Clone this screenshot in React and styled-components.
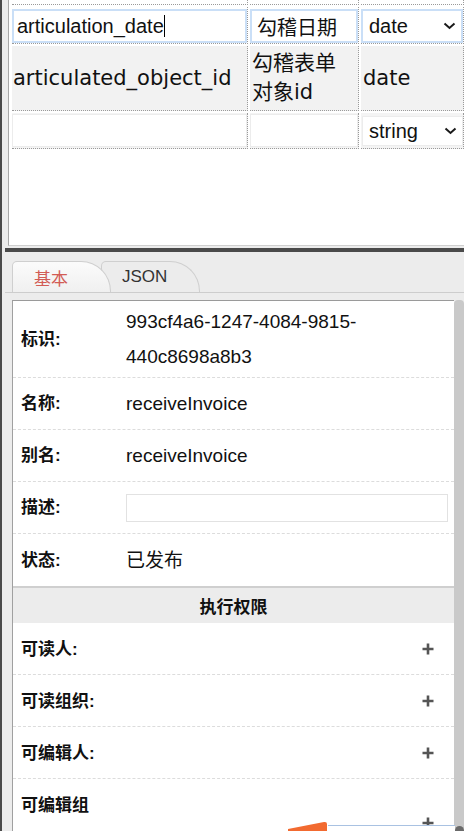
import React from "react";
import styled, { createGlobalStyle } from "styled-components";

const GlobalStyle = createGlobalStyle`
  html, body {
    margin: 0;
    padding: 0;
    overflow: hidden;
    background: #ececec;
  }
  * {
    box-sizing: border-box;
  }
`;

const SANS = `"Liberation Sans", "Noto Sans CJK SC", sans-serif`;

const Page = styled.div`
  position: relative;
  display: flex;
  height: 831px;
  overflow: hidden;
  background: #ececec;
  font-family: ${SANS};
  color: #111;
`;

const Edge = styled.div`
  width: 2px;
  flex: none;
  background: #4a4a4a;
`;

const Main = styled.div`
  flex: 1;
  display: flex;
  flex-direction: column;
  min-width: 0;
`;

const TopPanel = styled.div`
  margin-left: 6px;
  height: 246px;
  flex: none;
  background: #fff;
  border-left: 1px solid #a8a8a8;
  border-bottom: 1px solid #cfcfcf;
  padding-left: 3px;
  overflow: hidden;
`;

const FieldGrid = styled.div`
  display: grid;
  grid-template-columns: 236px 109px 103px;
  column-gap: 2px;
  row-gap: 2px;
`;

const Cell = styled.div`
  border-right: 1px dotted #9a9a9a;
  border-bottom: 1px dotted #9a9a9a;
  background: ${(p) => p.$bg || "#fff"};
  height: ${(p) => p.$h}px;
  padding: ${(p) => p.$pad || "0"};
  display: flex;
  align-items: ${(p) => p.$align || "stretch"};
`;

const TextBox = styled.div`
  flex: 1;
  height: ${(p) => p.$h || 34}px;
  display: flex;
  align-items: center;
  padding-left: ${(p) => p.$pl || 3}px;
  background: #fff;
  border: ${(p) => (p.$focus ? "2px solid #cadff7" : "1px solid #ececec")};
  font-family: ${SANS};
  font-size: 20px;
  white-space: nowrap;
  overflow: hidden;
`;

const Caret = styled.span`
  display: inline-block;
  width: 1.5px;
  height: 22px;
  background: #000;
`;

const SelectBox = styled(TextBox)`
  justify-content: space-between;
  padding-left: 6px;
  padding-right: 5px;
`;

const WideText = styled.div`
  font-family: "DejaVu Sans", "Noto Sans CJK SC", sans-serif;
  font-size: 21px;
  line-height: 29px;
  padding-left: ${(p) => p.$pl || 1}px;
  padding-right: 2px;
`;

const Divider = styled.div`
  height: 4px;
  flex: none;
  margin-top: 2px;
  margin-left: 3px;
  background: #4a4a4a;
`;

const TabBar = styled.div`
  display: flex;
  flex: none;
  margin-left: 3px;
  padding: 9px 0 0 7px;
  border-bottom: 1px solid #cdcdcd;
`;

const Tab = styled.div`
  position: relative;
  z-index: ${(p) => (p.$active ? 2 : 1)};
  width: 99px;
  height: 31px;
  margin-left: ${(p) => (p.$active ? 0 : -10)}px;
  padding-left: ${(p) => (p.$active ? 21 : 20)}px;
  display: flex;
  align-items: center;
  border: 1px solid #cfcfcf;
  border-bottom: none;
  border-radius: 5px 30px 0 0;
  background: ${(p) =>
    p.$active ? "linear-gradient(#fbfbfb, #f0f0f0)" : "#ececec"};
  color: ${(p) => (p.$active ? "#d25c55" : "#333")};
  font-family: ${(p) => (p.$active ? `"Noto Sans CJK SC", sans-serif` : SANS)};
  font-size: 17px;
`;

const Body = styled.div`
  flex: 1;
  display: flex;
  margin: 7px 0 0 10px;
  min-height: 0;
`;

const Panel = styled.div`
  flex: 1;
  background: #fff;
  border-left: 1px solid #a0a0a0;
  border-top: 1px solid #9a9a9a;
  overflow: hidden;
`;

const Scrollbar = styled.div`
  position: relative;
  width: 10px;
  flex: none;
  background: #c9c9c9;
  border-radius: 4px 4px 0 0;
`;

const ScrollKnob = styled.div`
  position: absolute;
  left: 1px;
  bottom: -4px;
  width: 9px;
  height: 9px;
  border-radius: 50%;
  background: #6a6a6a;
`;

const Row = styled.div`
  display: grid;
  grid-template-columns: 104px 1fr;
  align-items: center;
  min-height: ${(p) => (p.$solid ? 54 : 52)}px;
  border-bottom: ${(p) => (p.$solid ? "2px solid #cfcfcf" : "1px dashed #dcdcdc")};
`;

const Label = styled.div`
  padding: ${(p) => (p.$perm ? "8px 9px 6px 8px" : "8px 9px 8px 8px")};
  font-size: 17px;
  font-weight: bold;
  line-height: ${(p) => (p.$perm ? 37 : 35)}px;
`;

const Value = styled.div`
  padding: 3px 9px;
  font-size: 19px;
  line-height: 35px;
`;

const DescInput = styled.div`
  height: 28px;
  margin: 0 6px 0 9px;
  border: 1px solid #e2e2e2;
  background: #fff;
`;

const SectionHead = styled.div`
  height: 35px;
  display: flex;
  align-items: center;
  justify-content: center;
  background: #ececec;
  font-size: 17px;
  font-weight: bold;
`;

const AddCell = styled.div`
  display: flex;
  justify-content: flex-end;
  padding-right: 20px;
`;

const Overlay = styled.div`
  position: absolute;
  left: 287px;
  bottom: 0;
  display: flex;
  align-items: flex-end;
`;

const FloatBox = styled.div`
  width: 127px;
  height: 6px;
  margin-left: -1px;
  border-top: 1px solid #a9c2e2;
  background: #fff;
`;

const Chevron = () => (
  <svg width="13" height="8" viewBox="0 0 13 8">
    <path d="M1.5 1.5l5 4.5 5-4.5" fill="none" stroke="#1a1a1a" strokeWidth="2" />
  </svg>
);

const Plus = () => (
  <svg width="12" height="12" viewBox="0 0 12 12">
    <path d="M6 0.5v11M0.5 6h11" stroke="#555" strokeWidth="2.6" />
  </svg>
);

const rows = [
  { label: "名称:", value: "receiveInvoice" },
  { label: "别名:", value: "receiveInvoice" },
];

const perms = ["可读人:", "可读组织:", "可编辑人:", "可编辑组织:"];

export default function App() {
  return (
    <Page>
      <GlobalStyle />
      <Edge />
      <Main>
        <TopPanel>
          <FieldGrid>
            <Cell $h={5} />
            <Cell $h={5} />
            <Cell $h={5} />

            <Cell $h={37} $pad="2px 0 0 0">
              <TextBox $focus>
                articulation_date
                <Caret />
              </TextBox>
            </Cell>
            <Cell $h={37} $pad="2px 0 0 0">
              <TextBox $focus $pl={5}>勾稽日期</TextBox>
            </Cell>
            <Cell $h={37} $pad="2px 0 0 0">
              <SelectBox $focus>
                date
                <Chevron />
              </SelectBox>
            </Cell>

            <Cell $h={65} $bg="#f2f2f2" $align="center">
              <WideText>articulated_object_id</WideText>
            </Cell>
            <Cell $h={65} $bg="#f2f2f2" $align="center">
              <WideText $pl={2}>勾稽表单对象id</WideText>
            </Cell>
            <Cell $h={65} $bg="#f2f2f2" $align="center">
              <WideText $pl={2}>date</WideText>
            </Cell>

            <Cell $h={36} $bg="#f4f4f4" $pad="1px 0 0 0">
              <TextBox $h={33} />
            </Cell>
            <Cell $h={36} $bg="#f4f4f4" $pad="1px 0 0 0">
              <TextBox $h={33} />
            </Cell>
            <Cell $h={36} $bg="#f4f4f4" $pad="3px 0 0 1px">
              <SelectBox $h={30}>
                string
                <Chevron />
              </SelectBox>
            </Cell>
          </FieldGrid>
        </TopPanel>

        <Divider />

        <TabBar>
          <Tab $active>基本</Tab>
          <Tab>JSON</Tab>
        </TabBar>

        <Body>
          <Panel>
            <Row>
              <Label>标识:</Label>
              <Value>993cf4a6-1247-4084-9815-440c8698a8b3</Value>
            </Row>
            {rows.map((r) => (
              <Row key={r.label}>
                <Label>{r.label}</Label>
                <Value>{r.value}</Value>
              </Row>
            ))}
            <Row>
              <Label>描述:</Label>
              <DescInput />
            </Row>
            <Row $solid>
              <Label>状态:</Label>
              <Value>已发布</Value>
            </Row>
            <SectionHead>执行权限</SectionHead>
            {perms.map((p) => (
              <Row key={p}>
                <Label $perm>{p}</Label>
                <AddCell>
                  <Plus />
                </AddCell>
              </Row>
            ))}
          </Panel>
          <Scrollbar>
            <ScrollKnob />
          </Scrollbar>
        </Body>
      </Main>

      <Overlay>
        <svg width="42" height="11" viewBox="0 0 42 11">
          <path d="M1 11L1 9L37 2Q40 1.5 40 4L40 11Z" fill="#f26a30" />
        </svg>
        <FloatBox />
      </Overlay>
    </Page>
  );
}
